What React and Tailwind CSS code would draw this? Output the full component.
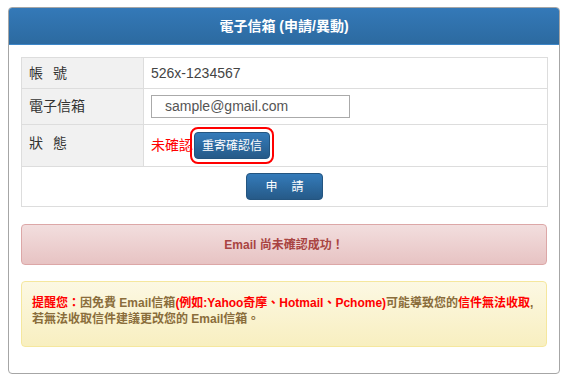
export default function App() {
  const font = { fontFamily: '"Liberation Sans", "Noto Sans CJK TC", sans-serif' };
  return (
    <div className="w-[568px] h-[382px] bg-white pt-[7px] pl-[8px]" style={font}>
      <div className="w-[552px] h-[367px] border border-[#a6a6a6] rounded-[4px] bg-white flex flex-col overflow-hidden">
        <div className="h-[37px] bg-gradient-to-b from-[#3479b8] to-[#2c6aa0] border-b border-[#3d86c8] flex items-center justify-center text-white font-bold text-[14px]">
          電子信箱 (申請/異動)
        </div>
        <div className="px-[12px] pt-[12px]">
          <table className="w-[527px] border-collapse text-[14px] text-[#333]">
            <tbody>
              <tr className="h-[31px]">
                <td className="w-[122px] bg-[#f1f1f1] border border-[#dddddd] pl-[7px]">
                  <span className="flex gap-[10px]"><span>帳</span><span>號</span></span>
                </td>
                <td className="border border-[#dddddd] pl-[7px] text-[#444]">526x-1234567</td>
              </tr>
              <tr className="h-[36px]">
                <td className="bg-[#f1f1f1] border border-[#dddddd] pl-[7px]">電子信箱</td>
                <td className="border border-[#dddddd] pl-[7px]">
                  <div className="w-[199px] h-[23px] border border-[#aaaaaa] pl-[13px] flex items-center text-[#555] text-[14px]">
                    sample@gmail.com
                  </div>
                </td>
              </tr>
              <tr className="h-[42px]">
                <td className="bg-[#f1f1f1] border border-[#dddddd] pl-[7px]">
                  <span className="flex gap-[10px] -mt-[4px]"><span>狀</span><span>態</span></span>
                </td>
                <td className="border border-[#dddddd] pl-[7px]">
                  <div className="flex items-center">
                    <span className="text-[#ff0000] text-[14px]">未確認</span>
                    <div className="-ml-[3px] border-2 border-[#ff0000] rounded-[8px] px-[2px] py-[3px]">
                      <button className="w-[76px] h-[27px] rounded-[4px] border border-[#245580] bg-gradient-to-b from-[#347bba] to-[#265a88] text-white text-[12px] flex items-center justify-center">
                        重寄確認信
                      </button>
                    </div>
                  </div>
                </td>
              </tr>
              <tr className="h-[40px]">
                <td colSpan={2} className="border border-[#dddddd]">
                  <div className="flex justify-center">
                    <button className="w-[77px] h-[27px] rounded-[4px] border border-[#245580] bg-gradient-to-b from-[#347bba] to-[#265a88] text-white text-[12px] flex items-center justify-center gap-[14px]">
                      <span>申</span><span>請</span>
                    </button>
                  </div>
                </td>
              </tr>
            </tbody>
          </table>
          <div className="mt-[17px] h-[41px] rounded-[4px] border border-[#dca7a7] bg-gradient-to-b from-[#f2dede] to-[#e7c3c3] flex items-center justify-center text-[#a94442] font-bold text-[12px]">
            Email 尚未確認成功！
          </div>
          <div className="mt-[16px] h-[66px] rounded-[4px] border border-[#f5e79e] bg-gradient-to-b from-[#fcf8e3] to-[#f8efc0] pl-[10px] pt-[13px] text-[12px] font-bold leading-[16px] text-[#8a6d3b]">
            <div className="whitespace-nowrap">
              <span className="text-[#ff0000]">提醒您：</span>因免費 Email信箱<span className="text-[#ff0000]">(例如:Yahoo奇摩、Hotmail、Pchome)</span>可能導致您的<span className="text-[#ff0000]">信件無法收取</span>,
            </div>
            <div>若無法收取信件建議更改您的 Email信箱。</div>
          </div>
        </div>
      </div>
    </div>
  );
}
